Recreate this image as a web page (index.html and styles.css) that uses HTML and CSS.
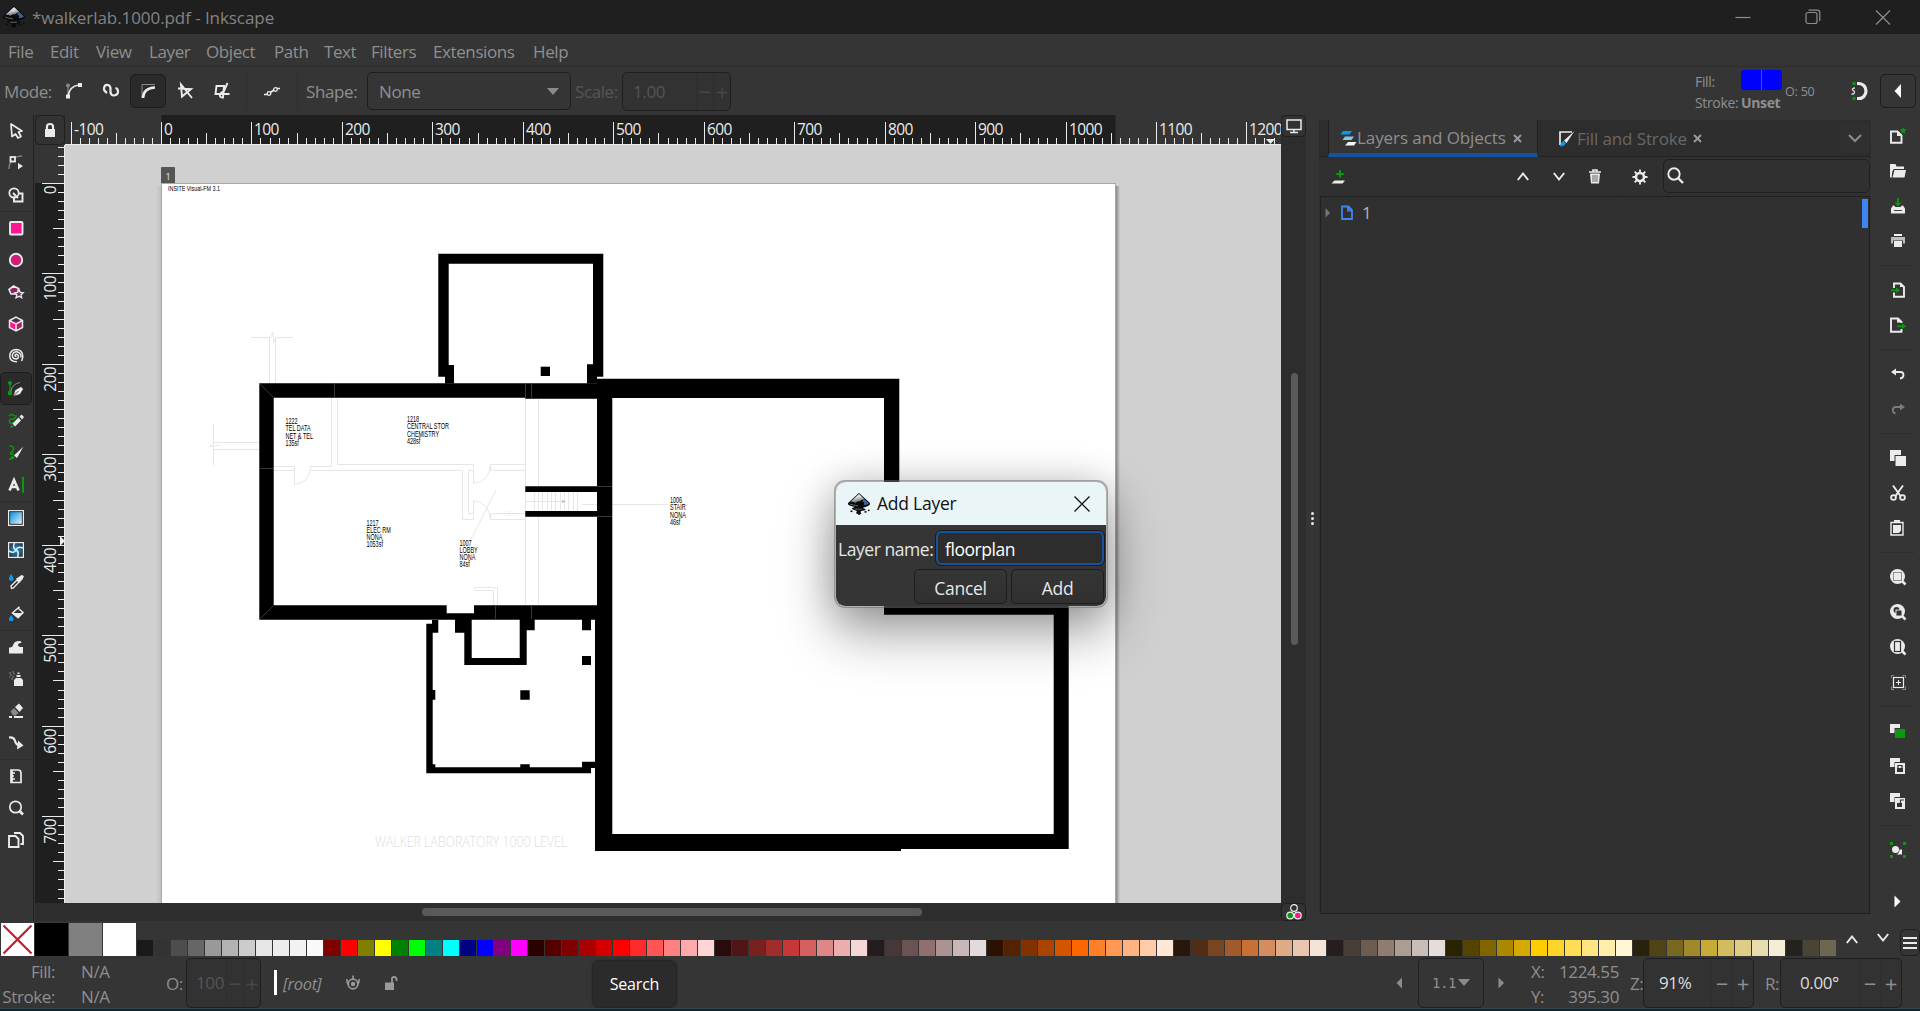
FILE: index.html
```html
<!DOCTYPE html>
<html lang="en">
<head>
<meta charset="utf-8">
<title>*walkerlab.1000.pdf - Inkscape</title>
<link rel="stylesheet" href="styles.css">
</head>
<body>
<svg class="defs" width="0" height="0">
  <defs>
    <linearGradient id="ink" x1="0" y1="0" x2=".35" y2="1"><stop offset="0" stop-color="#fff"/><stop offset=".5" stop-color="#d5d8dc"/><stop offset="1" stop-color="#5d6670"/></linearGradient>
    <linearGradient id="sky" x1="0" y1="0" x2="1" y2="1"><stop offset="0" stop-color="#0a8fdf"/><stop offset="1" stop-color="#e4f0f8"/></linearGradient>
    <radialGradient id="glow"><stop offset="0" stop-color="#10a5ff"/><stop offset="1" stop-color="#2b3f4b"/></radialGradient>
    <symbol id="logo" viewBox="0 0 24 24"><path d="M12 1L1.500 10.500Q0 12.500 2.500 13.500Q6 14.500 8 15Q4.500 15.800 5 17Q8 18.500 10 19L9 21L12 23L14.500 21.500Q13 20 14 19L19 18Q18 16.500 15.500 16L21 14Q24 12.500 22.500 10.500Z" fill="#0a0a0a"/><path d="M12 2L3.500 9.800Q7 9.500 8.500 11Q10.500 8.500 12.500 9.500Q14 7.500 17.500 7.200Z" fill="url(#ink)"/><path d="M17.500 7.200L22 11.500Q20.500 13 16.500 13.300Q18.500 11 15 9Z" fill="#3c62a0"/><path d="M3 12Q7 13.500 11 13.800" stroke="#777" fill="none" stroke-width=".8"/><path d="M8 17.200L15 17.200" stroke="#6d7f9a" stroke-width=".8"/><path d="M17.500 20L19.500 19.700M21 18.500L22.500 18.300M3.500 19L5.500 19.500" stroke="#0a0a0a" stroke-width="1.500"/></symbol>
  </defs>
</svg>
<div class="app">
  <header class="titlebar">
    <svg class="applogo" width="24" height="26"><use href="#logo"/></svg>
    <span class="title">*walkerlab.1000.pdf - Inkscape</span>
    <div class="winbtns">
      <svg viewBox="0 0 16 16"><path d="M.500 8.500H15.500"/></svg>
      <svg viewBox="0 0 16 16"><rect x="1" y="3.500" width="11" height="11" rx="2"/><path d="M3.500 1.200H12Q14.800 1.200 14.800 4V12"/></svg>
      <svg viewBox="0 0 16 16"><path d="M1 1.500L15 15.500M15 1.500L1 15.500"/></svg>
    </div>
  </header>
  <nav class="menubar">
    <span style="width:42px">File</span><span style="width:46px">Edit</span><span style="width:53px">View</span><span style="width:57px">Layer</span><span style="width:68px">Object</span><span style="width:50px">Path</span><span style="width:47px">Text</span><span style="width:62px">Filters</span><span style="width:100px">Extensions</span><span>Help</span>
  </nav>
  <section class="toolbar">
    <span class="mode">Mode:</span>
    <button class="tb"><svg viewBox="0 0 18 18"><path d="M3 3V14" stroke="#777" stroke-width="1.500"/><circle cx="3" cy="3.500" r="2" fill="#888"/><path d="M3 15Q4 4 14 3" stroke="#ebebeb" stroke-width="1.600" fill="none"/><path d="M1 12.500h4v4H1zM13 1h4v4h-4z" fill="#ebebeb"/></svg></button>
    <button class="tb"><svg viewBox="0 0 18 18"><path d="M5 11Q1.500 9 2 6Q3 2 6 3Q9 4 8.500 8Q8 13.500 12 13.500Q16 13 16 9.500Q16 6.500 13.500 6" fill="none" stroke="#ebebeb" stroke-width="2.200"/></svg></button>
    <button class="tb on"><svg viewBox="0 0 18 18"><path d="M3 16V2.500H16" fill="none" stroke="#8a8a8a"/><path d="M4 16Q4.500 6 16 5.500" fill="none" stroke="#ebebeb" stroke-width="2.600"/></svg></button>
    <button class="tb"><svg viewBox="0 0 18 18"><path d="M16 16L5 2.500L6 14.500L15 7L2 6.500" fill="none" stroke="#ebebeb" stroke-width="1.900"/></svg></button>
    <button class="tb"><svg viewBox="0 0 18 18"><path d="M16.500 12H2.500L3.500 4H11L10 15.500Q6 15.500 7 12Q9 10 11 9L14.500 1" fill="none" stroke="#ebebeb" stroke-width="1.900"/></svg></button>
    <i class="vsep"></i>
    <button class="tb wide"><svg viewBox="0 0 18 18"><path d="M1 12.500H4L8 10L11 8L14 6.500H17" fill="none" stroke="#ebebeb" stroke-width="1.700"/><circle cx="6" cy="11.500" r="1.800" fill="#353535" stroke="#ebebeb" stroke-width="1.300"/><circle cx="12.500" cy="7.500" r="1.800" fill="#353535" stroke="#ebebeb" stroke-width="1.300"/></svg></button>
    <i class="vsep"></i>
    <span class="shape">Shape:</span>
    <div class="combo"><span>None</span><b class="tri"></b></div>
    <span class="scale">Scale:</span>
    <div class="spin off scalespin"><span>1.00</span><i>−</i><i>+</i></div>
    <div class="styleind">
      <div class="names"><span>Fill:</span><span>Stroke:</span></div>
      <div class="vals"><div class="blue"></div><b>Unset</b></div>
      <span class="op">O: 50</span>
    </div>
    <svg class="snap" width="18" height="20" viewBox="0 0 18 20"><path d="M7 2.500H9A7 7.500 0 0 1 9 17.500H7" fill="none" stroke="#ebebeb" stroke-width="3.200"/><path d="M5 7Q2 7 2.500 9Q6 10.500 3.500 13L1.500 13" fill="none" stroke="#ddd" stroke-width="1.300"/><circle cx="4" cy="2.500" r="1.800" fill="#0a990e"/><circle cx="4" cy="17.500" r="1.800" fill="#0a990e"/></svg>
    <button class="fold"><svg width="8" height="14"><path d="M7 0V14L.500 7Z" fill="#fff"/></svg></button>
  </section>

  <main class="body">
    <aside class="toolbox">
      <div class="t"><svg viewBox="0 0 16 16"><path d="M3 1L14 8L10.500 9L13 13.500L10 15L7.500 11L4 13.500Z" fill="none" stroke="#ebebeb" stroke-width="1.700" stroke-linejoin="round"/></svg></div>
      <div class="t"><svg viewBox="0 0 16 16"><path d="M1 14Q1 8 4 6M7 2.500Q11 1 14 1" stroke="#888" fill="none" stroke-width="1.300"/><rect x="2.500" y="2" width="4.500" height="4.500" fill="none" stroke="#ebebeb" stroke-width="1.800"/><path d="M10 8V14.500L15 11Z" fill="#ebebeb"/></svg></div>
      <div class="t"><svg viewBox="0 0 16 16"><circle cx="6" cy="6" r="4.700" fill="none" stroke="#ebebeb" stroke-width="1.700"/><path d="M6 9.500V14.500H14.500V6.500H10M5 6L10 11" fill="none" stroke="#ebebeb" stroke-width="1.900"/></svg></div>
      <hr>
      <div class="t"><svg viewBox="0 0 16 16"><rect x="2" y="2" width="12.500" height="12.500" rx="1" fill="#ff1590" stroke="#ebebeb" stroke-width="1.900"/></svg></div>
      <div class="t"><svg viewBox="0 0 16 16"><circle cx="8" cy="8" r="6.200" fill="#cc1f78" stroke="#ebebeb" stroke-width="1.900"/></svg></div>
      <div class="t"><svg viewBox="0 0 16 16"><path d="M5.500 2L10.500 4.500L9.500 10H3L1 5.500Z" fill="#8f2360" stroke="#ebebeb" stroke-width="1.600"/><path d="M11 5.500L12.300 8.300L15.300 8.700L13 10.800L13.700 13.800L11 12.300L8 13.800L8.800 10.800L6.800 8.700L9.700 8.300Z" fill="#8f2360" stroke="#ebebeb" stroke-width="1.300"/></svg></div>
      <div class="t"><svg viewBox="0 0 16 16"><path d="M8 1L15 4.500V11.500L8 15.200L1 11.500V4.500Z" fill="#5b2b45"/><path d="M1 4.500L8 8V15L1 11.500Z" fill="#ff1590"/><path d="M15 4.500L8 8V15L15 11.500Z" fill="#a8246e"/><path d="M8 1.200L14.500 4.500V11.500L8 14.800L1.500 11.500V4.500ZM1.500 4.500L8 8L14.500 4.500M8 8V15" fill="none" stroke="#ebebeb" stroke-width="1.500"/></svg></div>
      <div class="t"><svg viewBox="0 0 16 16"><path d="M8.500 8.500Q7 8.500 7 7.300Q8 5.500 10 7Q11.500 10 8.500 11Q4.500 11 4.300 7.500Q5 3.500 9 3.700Q13.500 5 13 9.500M9 13.800Q2 14 1.700 8Q2.200 1.500 8.500 1.500Q14.800 2 14.800 8.500Q14.500 11.500 13.500 13" fill="none" stroke="#ebebeb" stroke-width="1.500"/></svg></div>
      <div class="t on"><svg viewBox="0 0 16 16"><path d="M2 2V12" stroke="#0a990e" stroke-width="1.300"/><circle cx="2" cy="2" r="2" fill="#0a990e"/><path d="M0 10h4v4H0z" fill="#0a990e"/><path d="M3 10Q4 3 12 1.500" fill="none" stroke="#888"/><path d="M5 15.500L7 9L13 5.500L15.500 8L12 13.500ZM5 15.500L10.500 10" fill="#ebebeb" stroke="#2b2b2b" stroke-width=".8"/></svg></div>
      <div class="t"><svg viewBox="0 0 16 16"><path d="M1 3Q3 .500 5 2T8 3Q8 6 4 6T2 10Q3 11 6 9" fill="none" stroke="#0a990e" stroke-width="1.500"/><path d="M2 15L3.500 11L6 14Z" fill="#0a990e"/><path d="M4.500 10.500L10.500 4.500L13 7.500L7 13.500ZM11.500 3.500L13.500 1.500L16 4L14 6.500Z" fill="#ebebeb"/></svg></div>
      <div class="t"><svg viewBox="0 0 16 16"><path d="M1.500 1Q6 1 5.500 4T2.500 8Q2 10 6 9" fill="none" stroke="#0a990e" stroke-width="1.500"/><path d="M1 15Q2 11 5.500 11L7 13Q5 15 1 15Z" fill="#0a990e"/><path d="M6 10.500L15.500 1.500L9 13Z" fill="#ebebeb"/></svg></div>
      <div class="t"><svg viewBox="0 0 16 16"><path d="M15 0V16" stroke="#0a990e" stroke-width="2"/><path d="M1.500 13.500L6 3L10.500 13.500M3 10H9" fill="none" stroke="#ebebeb" stroke-width="2.600"/></svg></div>
      <hr>
      <div class="t"><svg viewBox="0 0 16 16"><rect x=".6" y=".6" width="14.800" height="14.800" fill="#2a2a2a" stroke="#ebebeb" stroke-width="1.200"/><rect x="2.200" y="2.200" width="11.600" height="11.600" fill="url(#sky)"/></svg></div>
      <div class="t"><svg viewBox="0 0 16 16"><rect x=".6" y=".6" width="14.800" height="14.800" fill="url(#glow)" stroke="#ebebeb" stroke-width="1.200"/><path d="M8 8Q4 6 6.500 1M8 8Q10 4 15 6M8 8Q11.500 10 9.500 15M8 8Q6 12 1 9" fill="none" stroke="#ebebeb" stroke-width="1.500"/></svg></div>
      <div class="t"><svg viewBox="0 0 16 16"><path d="M3 0Q6 4 5.500 5.500Q3.500 8.500 1 5.500Q.500 4 3 0Z" fill="#0d98ea"/><path d="M3.500 14.500L3 12L9 6L11 8L5.500 14Z" fill="none" stroke="#ebebeb" stroke-width="1.300"/><path d="M8 4.500L10 3.500L13.500 1L16 2L14.500 5.500L12.500 7.500L12 9Z" fill="#ebebeb"/></svg></div>
      <div class="t"><svg viewBox="0 0 16 16"><path d="M3 9Q6 12.500 5.500 14Q3.500 16.500 1 14Q.500 12.500 3 9Z" fill="#0d98ea"/><path d="M11.500 .800L4.500 7L10 11.500L15 6.500L10 2" fill="none" stroke="#ebebeb" stroke-width="1.500"/><path d="M4 7H15.500L10 12.500Z" fill="#ebebeb"/></svg></div>
      <hr>
      <div class="t"><svg viewBox="0 0 16 16"><path d="M1 14.500V8.500Q4.500 9 5.500 5Q7 1.500 12 2Q13.500 2.500 13.500 4Q10.500 3.500 10 6Q10.500 8.500 15 8V14.500Z" fill="#ebebeb"/></svg></div>
      <div class="t"><svg viewBox="0 0 16 16"><path d="M6 15V9L8 7H13L15 9V15ZM8.500 4H12.500V6H8.500ZM9.500 1.500H11.500V3H9.500Z" fill="#ebebeb"/><path d="M1 2H3M4 1H6M2 4H4M5 3H7M1 6H2M4 6H6M3 8H5" stroke="#888" stroke-width="1.200"/></svg></div>
      <div class="t"><svg viewBox="0 0 16 16"><path d="M7 4L11 .500L15 5L11.500 9Z" fill="#ebebeb"/><path d="M6 5L10.500 10L7.500 12.500H5L2.500 8.500Z" fill="#8a8a8a"/><path d="M1 14H4M6 14H15" stroke="#ebebeb" stroke-width="2"/></svg></div>
      <div class="t"><svg viewBox="0 0 16 16"><path d="M1 2.500Q6 2 7 6T12 10.500" fill="none" stroke="#ebebeb" stroke-width="2.200"/><path d="M10 5.500L15.500 10.500L9 14.500Z" fill="#ebebeb"/></svg></div>
      <hr>
      <div class="t"><svg viewBox="0 0 16 16"><path d="M3 2H10Q13 2 13 5V14.500H3ZM3 5H7M3 8H6M3 11H7M4 2V14" fill="none" stroke="#ebebeb" stroke-width="1.700"/></svg></div>
      <div class="t"><svg viewBox="0 0 16 16"><circle cx="7.500" cy="7" r="5.700" fill="none" stroke="#ebebeb" stroke-width="1.700"/><path d="M11.500 11L15 14.500" stroke="#ebebeb" stroke-width="2.600"/></svg></div>
      <div class="t"><svg viewBox="0 0 16 16"><path d="M1 4H7.500L10.500 7V15H1ZM6 1H12L15 4V12H12.500" fill="none" stroke="#ebebeb" stroke-width="1.900"/></svg></div>
    </aside>

    <section class="view">
      <div class="lock"><svg width="12" height="16" viewBox="0 0 12 16"><path d="M3 8V4.500Q3 2 6 2T9 4.500V8" fill="none" stroke="#ebebeb" stroke-width="2.200"/><rect x="1" y="7" width="10" height="8" fill="#ebebeb"/></svg></div>
      <svg class="hruler" id="hruler" width="1216" height="30"></svg>
      <div class="screen"><svg width="16" height="15" viewBox="0 0 16 15"><path d="M1 1H15V10.500H1ZM4 13.500H12M8 11V13" fill="none" stroke="#ebebeb" stroke-width="1.500"/></svg></div>
      <svg class="vruler" id="vruler" width="30" height="758"></svg>
      <svg class="canvas" width="1216" height="758" viewBox="65 145 1216 758">
        <defs>
          <linearGradient id="sh" x1="0" x2="1"><stop offset="0" stop-color="#777"/><stop offset="1" stop-color="#d0d0d0"/></linearGradient>
          <linearGradient id="shl" x1="0" x2="1"><stop offset="0" stop-color="#d0d0d0"/><stop offset="1" stop-color="#bdbdbd"/></linearGradient>
        </defs>
        <rect x="65" y="145" width="1216" height="758" fill="#d0d0d0"/>
        <rect x="1115" y="186" width="5" height="717" fill="url(#sh)"/>
        <rect x="156" y="186" width="6" height="717" fill="url(#shl)"/>
        <rect x="161.500" y="183.500" width="954" height="730" fill="#fff" stroke="#a8a8a8"/>
        <path d="M161 183V168Q161 167 162 167H174Q175 167 175 168V183Z" fill="#555"/>
        <text x="165.500" y="180" class="pg">1</text>
        <text x="168" y="191.300" class="room" textLength="52" lengthAdjust="spacingAndGlyphs" style="font-size:6.5px">INSITE Visual-FM 3.1</text>
        <g fill="none" stroke="#e6e6e6">
          <path d="M251 337.500H271L272.500 332L274 342L275.500 337.500H293M269.500 338V383M275.500 338V383"/>
          <path d="M213.500 424.500V444L209 446.500L220 445M213.500 446V465.500M214 442.500H259M214 449.500H259"/>
          <path d="M331.500 398V467M337.500 398V464.500H473.500V483.500Q489 482 490.500 465V470.500H525.500M490.500 464.500H525.500M274 466.500H294.500V484.500Q309 483 310.500 468V466.500H331.500M274 470.500H294M310.500 470.500H462.500V519.500H473.500V500.500Q489 502 490.500 519.500H525.500M473 470.500H468.500V513.500H473.500M490.500 519V513.500H525.500M525.500 398V486M525.500 516V605M538.500 398V486M538.500 516V605M474.500 590V587.500H497.500V605M474.500 590.500H493.500V605M496 490L471 539"/>
          <path d="M525 501.500H565M534.500 492V511M538.500 492V511M542.500 492V511M547.500 492V511M551.500 492V511M555.500 492V511M560.500 492V511M564.500 492V511M568.500 492V511M573.500 492V511M577.500 492V511M582 504.500H668M525.500 486V517"/>
        </g>
        <path d="M562 500V503L566 501.500Z" fill="#bbb"/>
        <g fill="#000">
          <path d="M438.300 253.700H603.300V376.700H597V383.500H587V364.300H593V263.700H448.700V365H454V383.500H445V376.700H438.300Z"/>
          <path d="M540.700 366.700h9.300v9.300h-9.300z"/>
          <path fill-rule="evenodd" d="M259.300 383.300H597V378.700H899.300V500H884V398H612.300V834H1053.700V614.700H884V598H1068.700V849H901V851H595V619.700H259.300ZM273.700 397.700V605.300H446.700V613.300H474V605.300H597V516.700H525.300V511H597V492H525.300V486.300H597V398.700H525.300V397.700Z"/>
          <path d="M432 620H438.300V632.700H432.700V690H435.300V699.700H432.700V764.300H435.300V767.300H520.300V764.300H529.700V767.300H582V761.700H595V768H591V773.300H426.300V623.700H432Z"/>
          <path d="M455 619H471.700V658H519.700V619H534.700V630.300H526.700V665H464.300V632.700H455ZM520.300 690.300h9.400v9.400h-9.400zM582 619h9v11.300h-9zM582 656h9v9h-9z"/>
        </g>
        <path d="M260 384L273.500 397.500M334.500 383V397M525.500 383V398M531.500 383V398M259 468.500H273M260 619L273 606M495.500 606V619M531.500 606V619M597 486.500H612M597 516.500H612" stroke="#444" stroke-width=".8" fill="none"/>
        <g class="room">
          <g transform="translate(285.500 424) scale(.66 1)"><text>1222</text><text y="7.300">TEL DATA</text><text y="14.600">NET &amp; TEL</text><text y="21.900">135sf</text></g>
          <g transform="translate(407 422) scale(.66 1)"><text>1218</text><text y="7.300">CENTRAL STOR</text><text y="14.600">CHEMISTRY</text><text y="21.900">428sf</text></g>
          <g transform="translate(366.500 525.500) scale(.66 1)"><text>1217</text><text y="7.300">ELEC RM</text><text y="14.600">NONA</text><text y="21.900">1053sf</text></g>
          <g transform="translate(459.500 545.500) scale(.66 1)"><text>1007</text><text y="7.300">LOBBY</text><text y="14.600">NONA</text><text y="21.900">84sf</text></g>
          <g transform="translate(670 503) scale(.66 1)"><text>1006</text><text y="7.300">STAIR</text><text y="14.600">NONA</text><text y="21.900">46sf</text></g>
        </g>
        <text x="504" y="516" class="faint" style="font-size:7px">UP</text>
        <text x="375" y="847" class="faint" textLength="192" lengthAdjust="spacingAndGlyphs">WALKER LABORATORY 1000 LEVEL</text>
      </svg>
      <div class="vscroll"><i></i></div>
      <div class="hscroll"><i></i></div>
      <div class="cms"><svg width="18" height="18" viewBox="0 0 18 18"><circle cx="9" cy="5" r="3.300" fill="none" stroke="#ebebeb" stroke-width="1.200"/><circle cx="5.200" cy="12.500" r="3.400" fill="#0a990e" stroke="#ebebeb" stroke-width="1.200"/><circle cx="12.800" cy="12.500" r="3.400" fill="#ff1590" stroke="#ebebeb" stroke-width="1.200"/></svg></div>
    </section>

    <div class="grip"><i></i><i></i><i></i></div>

    <section class="dock">
      <div class="tabs">
        <div class="tab active"><svg width="17" height="18" viewBox="0 0 17 18"><path d="M3 2H12L9.500 5.500H.500Z" fill="#0d98ea"/><path d="M5 7.500H14L11.500 11H2.500Z" fill="#86c5ec"/><path d="M8 13H16.500L14 16.500H5Z" fill="#f4f4f4"/></svg><span>Layers and Objects</span><svg class="x" width="9" height="9" viewBox="0 0 9 9"><path d="M1 1L8 8M8 1L1 8"/></svg></div>
        <div class="tab"><svg width="18" height="18" viewBox="0 0 18 18"><path d="M2 15V2H14" fill="none" stroke="#ebebeb" stroke-width="1.700"/><path d="M16.500 1L6 10.500L8.500 13Z" fill="#f0f0f0"/><path d="M2 16.500Q3 11.500 5.500 11L8 13.500Q6 16.500 2 16.500Z" fill="#0d98ea"/></svg><span class="dimtext">Fill and Stroke</span><svg class="x" width="9" height="9" viewBox="0 0 9 9"><path d="M1 1L8 8M8 1L1 8"/></svg></div>
        <div class="tabmenu"><svg width="14" height="8" viewBox="0 0 14 8"><path d="M1 1L7 7L13 1" fill="none" stroke="#8b8b8b" stroke-width="2"/></svg></div>
      </div>
      <div class="layerbar">
        <svg width="14" height="14" viewBox="0 0 14 14"><path d="M9 0V7.500M5.200 4H12.800" stroke="#0a990e" stroke-width="2"/><path d="M3.500 10.500H14L11.500 13.500H.500Z" fill="#ebebeb"/></svg>
        <svg class="up" width="12" height="9" viewBox="0 0 12 9"><path d="M.800 8L6 1.500L11.200 8" fill="none" stroke="#ebebeb" stroke-width="2"/></svg>
        <svg class="down" width="12" height="9" viewBox="0 0 12 9"><path d="M.800 1L6 7.500L11.200 1" fill="none" stroke="#ebebeb" stroke-width="2"/></svg>
        <svg class="trash" width="12" height="15" viewBox="0 0 12 15"><path d="M0 3H12M4 2.500V1H8V2.500" fill="none" stroke="#ebebeb" stroke-width="1.600"/><path d="M1 4.500H11L10 14.500H2Z" fill="#ebebeb"/><path d="M4 6V13M6 6V13M8 6V13" stroke="#444" stroke-width=".8"/></svg>
        <i class="vsep"></i>
        <svg class="gear" width="16" height="16" viewBox="0 0 16 16"><circle cx="8" cy="8" r="4" fill="none" stroke="#ebebeb" stroke-width="2.600"/><path d="M8 .500V4M8 12V15.500M.500 8H4M12 8H15.500M2.700 2.700L5 5M11 11L13.300 13.300M13.300 2.700L11 5M5 11L2.700 13.300" stroke="#ebebeb" stroke-width="1.800"/></svg>
        <div class="search"><svg width="17" height="17" viewBox="0 0 17 17"><circle cx="7" cy="7" r="5.700" fill="none" stroke="#ebebeb" stroke-width="1.900"/><path d="M11 11L16 16" stroke="#ebebeb" stroke-width="2.400"/></svg></div>
      </div>
      <div class="list">
        <div class="row"><svg width="6" height="10"><path d="M.500 0V9.500L5 5Z" fill="#777"/></svg><svg width="12" height="16" viewBox="0 0 12 16"><path d="M1 1.500H7.500L11 5V14H1ZM7 1.500V5.500H11" fill="none" stroke="#3f85f2" stroke-width="1.800"/></svg><span>1</span><i></i></div>
      </div>
    </section>

    <aside class="commands">
      <div class="c"><svg viewBox="0 0 16 16"><path d="M1 3.500H7.500L11.500 7.500V14.800H1Z" fill="none" stroke="#ebebeb" stroke-width="1.900"/><path d="M7 4V8H11" fill="#ebebeb"/><path d="M13.200 -.800L14.200 1.300L16.500 1.600L14.800 3.200L15.200 5.500L13.200 4.400L11.200 5.500L11.600 3.200L10 1.600L12.200 1.300Z" fill="#0a990e"/></svg></div>
      <div class="c"><svg viewBox="0 0 16 16"><path d="M0 14.500V1H5.500L6.500 3.500H14V6H4Q1.800 7 1.800 14.500ZM2.500 14.500L4.500 7H16L14.500 14.500Z" fill="#ebebeb"/></svg></div>
      <div class="c"><svg viewBox="0 0 16 16"><path d="M8 0V4.500" stroke="#0a990e" stroke-width="2"/><path d="M4.500 4.500H11.500L8 8.500Z" fill="#0a990e"/><path d="M1 15.500V10.500L3 7.500H4L5.500 9H10.500L12 7.500H13L15 10.500V15.500Z" fill="#ebebeb"/><path d="M4 12.500H12" stroke="#444"/></svg></div>
      <div class="c"><svg viewBox="0 0 16 16"><path d="M4 1H12V3H4Z" fill="#f4f4f4"/><path d="M1 4H15V10.500H1Z" fill="#bdbdbd"/><path d="M3 7.500H13V14.500H3Z" fill="#353535"/><path d="M4 8H12V14H4Z" fill="#ebebeb"/></svg></div>
      <hr>
      <div class="c"><svg viewBox="0 0 16 16"><path d="M4 6V1.500H10.500L14 5V14.800H4V10.500" fill="none" stroke="#ebebeb" stroke-width="1.900"/><path d="M10 1V5H14" fill="#ebebeb"/><path d="M1 8.300H7" stroke="#0a990e" stroke-width="1.800"/><path d="M6 5.500L10 8.300L6 11Z" fill="#0a990e"/></svg></div>
      <div class="c"><svg viewBox="0 0 16 16"><path d="M11.500 6V5L8 1.500H1V14.800H11.500V12" fill="none" stroke="#ebebeb" stroke-width="1.900"/><path d="M7 1V5.500H11.500" fill="#ebebeb"/><path d="M7 9.300H13" stroke="#0a990e" stroke-width="1.800"/><path d="M12 6.500L16 9.300L12 12Z" fill="#0a990e"/></svg></div>
      <hr>
      <div class="c"><svg viewBox="0 0 16 16"><path d="M5 6H10.500Q13.500 6 13.500 9Q13.500 12 10 12.500" fill="none" stroke="#ebebeb" stroke-width="1.800"/><path d="M1 6L6 2.500V9.500Z" fill="#ebebeb"/></svg></div>
      <div class="c"><svg viewBox="0 0 16 16"><path d="M11 6H6Q2.800 6 2.800 9Q2.800 12 5.500 12.500" fill="none" stroke="#7c7c7c" stroke-width="1.800"/><path d="M15 6L10 2.500V9.500Z" fill="#7c7c7c"/></svg></div>
      <hr>
      <div class="c"><svg viewBox="0 0 16 16"><path d="M0 0H11V5H4.500V11H0Z" fill="#ebebeb"/><path d="M5.500 6H16V16H5.500Z" fill="#ebebeb"/></svg></div>
      <div class="c"><svg viewBox="0 0 16 16"><path d="M3 .500L10.500 11M13 .500L5.500 11" stroke="#ebebeb" stroke-width="1.900"/><circle cx="3.500" cy="12.500" r="2.400" fill="none" stroke="#ebebeb" stroke-width="1.800"/><circle cx="12.500" cy="12.500" r="2.400" fill="none" stroke="#ebebeb" stroke-width="1.800"/></svg></div>
      <div class="c"><svg viewBox="0 0 16 16"><path d="M1 2.500H13V15H1Z" fill="none" stroke="#ebebeb" stroke-width="1.400"/><path d="M4 0H10V3H4ZM3 5H11V10.500L9 13H3Z" fill="#ebebeb"/></svg></div>
      <hr>
      <div class="c"><svg viewBox="0 0 16 16"><circle cx="7.500" cy="7.500" r="7.500" fill="#ebebeb"/><path d="M12 12L15.500 15.500" stroke="#ebebeb" stroke-width="2.500"/><rect x="3.500" y="3.500" width="8" height="8" fill="none" stroke="#333" stroke-dasharray="1 1"/></svg></div>
      <div class="c"><svg viewBox="0 0 16 16"><circle cx="7.500" cy="7.500" r="7.500" fill="#ebebeb"/><path d="M12 12L15.500 15.500" stroke="#ebebeb" stroke-width="2.500"/><circle cx="6.500" cy="6" r="3" fill="#353535"/><rect x="6" y="6" width="6" height="6" fill="#353535" stroke="#ebebeb" stroke-width=".9"/></svg></div>
      <div class="c"><svg viewBox="0 0 16 16"><circle cx="7.500" cy="7.500" r="7.500" fill="#ebebeb"/><path d="M12 12L15.500 15.500" stroke="#ebebeb" stroke-width="2.500"/><rect x="4.500" y="2.500" width="6" height="10" fill="none" stroke="#333" stroke-width="1.200"/></svg></div>
      <div class="c"><svg viewBox="0 0 16 16"><path d="M1.500 4V1.500H4M12.500 1.500H15.500V4M15.500 12.500V15.500H12.500M4 15.500H1.500V12.500" fill="none" stroke="#888"/><rect x="3.500" y="3.500" width="10" height="10" fill="none" stroke="#ebebeb" stroke-width="1.200"/><path d="M8.500 6V11M6 8.500H11" stroke="#ebebeb"/></svg></div>
      <hr>
      <div class="c"><svg viewBox="0 0 16 16"><path d="M0 1H10V5H4.500V10H0Z" fill="#ebebeb"/><path d="M5 6H15V15H5Z" fill="#0a990e"/></svg></div>
      <div class="c"><svg viewBox="0 0 16 16"><path d="M0 0H10V4H4.500V9H0Z" fill="#ebebeb"/><path d="M5 5H15V16H5Z" fill="#ebebeb"/><path d="M7 10H13V14H7Z" fill="#333"/><path d="M8 10V7.500H12V10" fill="none" stroke="#333" stroke-width="1.200"/></svg></div>
      <div class="c"><svg viewBox="0 0 16 16"><path d="M0 0H10V4H4.500V9H0Z" fill="#ebebeb"/><path d="M5 5H15V16H5Z" fill="#ebebeb"/><path d="M7 10H12V14H7Z" fill="#333"/><path d="M10.500 10V7H14" fill="none" stroke="#333" stroke-width="1.200"/></svg></div>
      <hr>
      <div class="c"><svg viewBox="0 0 16 16"><path d="M0 0H3V3H0ZM13 0H16V3H13ZM0 13H3V16H0ZM13 13H16V16H13Z" fill="#0a990e"/><circle cx="5.500" cy="7.500" r="3.500" fill="#ebebeb"/><path d="M9.500 7.500H12V12.500H6.500Q9.500 11 9.500 7.500Z" fill="#ebebeb"/></svg></div>
      <svg class="more" width="7" height="13"><path d="M.500 .500V12.500L6.500 6.500Z" fill="#fff"/></svg>
    </aside>
  </main>

  <section class="palette">
    <div class="big"><span class="none"><svg width="33" height="33" viewBox="0 0 33 33"><path d="M2.500 2.500L30.500 30.500M30.500 2.500L2.500 30.500" stroke="#c02030" stroke-width="2.200"/></svg></span><span style="background:#000"></span><span style="background:#808080"></span><span style="background:#fff"></span></div>
    <div class="swatches" id="swatches"></div>
    <svg class="pup" width="12" height="9" viewBox="0 0 12 9"><path d="M.800 8L6 1.500L11.200 8" fill="none" stroke="#ebebeb" stroke-width="2"/></svg>
    <svg class="pdn" width="12" height="9" viewBox="0 0 12 9"><path d="M.800 1L6 7.500L11.200 1" fill="none" stroke="#ebebeb" stroke-width="2"/></svg>
    <div class="burger"><i></i><i></i><i></i></div>
  </section>

  <footer class="status">
    <div class="fs"><span>Fill:</span><span>N/A</span><span>Stroke:</span><span>N/A</span></div>
    <span class="olab">O:</span>
    <div class="spin off opspin"><span>100</span><i>−</i><i>+</i></div>
    <b class="caret"></b>
    <em>[root]</em>
    <svg class="eye" width="16" height="16" viewBox="0 0 16 16"><path d="M2 4Q1.500 7 3 9M14 4Q14.500 7 13 9M8 .500V5" stroke="#9a9a9a" stroke-width="1.600" fill="none"/><circle cx="8" cy="9" r="4.800" fill="none" stroke="#9a9a9a" stroke-width="1.700"/><circle cx="8" cy="9" r="2.200" fill="#9a9a9a"/></svg>
    <svg class="unlock" width="14" height="16" viewBox="0 0 14 16"><path d="M1 7.500H10V15H1Z" fill="#9a9a9a"/><path d="M8 8V3.500Q8 2 10 2T12.500 3.500V6" fill="none" stroke="#9a9a9a" stroke-width="1.800"/></svg>
    <div class="tip">Search</div>
    <div class="right">
      <svg class="pl" width="7" height="12"><path d="M6 .500V11.500L.500 6Z" fill="#8b8b8b"/></svg>
      <div class="pagebox"><span>1.1</span><b class="tri"></b></div>
      <svg class="pr" width="7" height="12"><path d="M.500 .500V11.500L6 6Z" fill="#8b8b8b"/></svg>
      <div class="xy"><span>X:</span><span>1224.55</span><span>Y:</span><span>395.30</span></div>
      <span class="zl">Z:</span>
      <div class="spin zspin"><span>91%</span><i>−</i><i>+</i></div>
      <span class="rl">R:</span>
      <div class="spin rspin"><span>0.00°</span><i>−</i><i>+</i></div>
    </div>
  </footer>
  <div class="edge"></div>
</div>

<div class="dialog">
  <div class="dhead"><svg width="24" height="24"><use href="#logo"/></svg><span>Add Layer</span><svg class="dx" width="16" height="16" viewBox="0 0 16 16"><path d="M.500 .500L15.500 15.500M15.500 .500L.500 15.500" stroke="#111" stroke-width="1.300"/></svg></div>
  <div class="dbody">
    <div class="field"><label>Layer name:</label><div class="input">floorplan</div></div>
    <div class="actions"><div class="btn">Cancel</div><div class="btn">Add</div></div>
  </div>
</div>
<script src="app.js"></script>
</body>
</html>
```
FILE: styles.css
```css
* { box-sizing: border-box; }
body { margin: 0; width: 1920px; height: 1011px; overflow: hidden; position: relative; background: #353535; color: #8f8f8f; font: 17px/22px "Open Sans", "Noto Sans", sans-serif; letter-spacing: -0.4px; }
svg { display: block; overflow: visible; flex: none; }
.defs { position: absolute; }
button { border: 1px solid transparent; background: none; padding: 0; margin: 0; display: flex; align-items: center; justify-content: center; flex: none; }
.app { height: 1011px; display: flex; flex-direction: column; }
.titlebar { height: 34px; flex: none; background: #1f1f1f; display: flex; align-items: center; padding: 0 29px 0 2px; }
.title { margin-left: 6px; padding-top: 1px; color: #838383; font-size: 17px; letter-spacing: -0.07px; }
.winbtns { margin-left: auto; display: flex; gap: 54px; }
.winbtns svg { width: 16px; height: 16px; fill: none; stroke: #8e8e8e; stroke-width: 1.2; }
.menubar { height: 33px; flex: none; display: flex; align-items: center; padding: 3px 0 0 8px; border-bottom: 1px solid #2e2e2e; }
.menubar span { flex: none; }
.toolbar { height: 48px; flex: none; display: flex; align-items: center; padding-left: 4px; white-space: nowrap; }
.mode { width: 52px; }
.mode, .shape, .scale, .combo span, .scalespin span { padding-top: 1px; }
.tb { width: 36px; height: 34px; margin-right: 1px; border-radius: 5px; }
.tb svg { width: 18px; height: 18px; }
.tb.on { background: #2a2a2a; border-color: #1d1d1d; }
.tb.wide { width: 50px; margin: 0; }
.vsep { width: 1px; height: 38px; background: #2e2e2e; flex: none; }
.toolbar .tb + .vsep { margin-left: 5px; }
.toolbar .tb.wide + .vsep { margin-left: 0; }
.shape { width: 61px; margin-left: 8px; flex: none; }
.combo { width: 204px; height: 38px; border: 1px solid #1d1d1d; border-radius: 5px; display: flex; align-items: center; justify-content: space-between; padding: 0 11px; flex: none; }
.tri { border: 6px solid transparent; border-top: 7px solid #8b8b8b; border-bottom: 0; }
.scale { width: 47px; margin-left: 4px; color: #555; }
.spin { display: flex; align-items: center; border: 1px solid #1f1f1f; border-radius: 5px; color: #ddd; flex: none; overflow: hidden; background: #323232; }
.spin span { flex: 1; }
.spin i { height: 100%; border-left: 1px solid #2e2e2e; font-style: normal; font-size: 22px; letter-spacing: 0; display: flex; align-items: center; justify-content: center; color: #8f8f8f; flex: none; }
.spin.off { color: #555; }
.spin.off i { color: #484848; }
.scalespin { width: 109px; height: 39px; padding-left: 10px; }
.scalespin i { width: 17px; }
.styleind { margin-left: auto; display: flex; font-size: 14px; letter-spacing: -0.35px; line-height: 21px; width: 155px; }
.names { display: flex; flex-direction: column; width: 46px; padding-top: 1px; }
.vals { width: 44px; display: flex; flex-direction: column; }
.blue { width: 41px; height: 20px; border-radius: 3px; margin-bottom: 2px; background: linear-gradient(90deg, #00f 20px, #4a4ae8 20px, #4a4ae8 21px, #00f 21px); }
.op { font-size: 12.500px; align-self: center; letter-spacing: -0.2px; }
.snap { margin-right: 12px; }
.fold { width: 36px; height: 34px; border: 1px solid #1d1d1d; border-radius: 5px; margin-right: 4px; }

.body { height: 806px; flex: none; display: flex; }
.toolbox { width: 34px; border-right: 1.500px solid #222; flex: none; }
.t { width: 32px; height: 32px; display: flex; align-items: center; justify-content: center; }
.t svg { width: 16px; height: 16px; }
.t.on { height: 33px; padding-top: 1px; background: #2a2a2a; border: 1px solid #1d1d1d; border-radius: 5px; }
hr { border: 0; height: 1px; background: #2e2e2e; margin: 0; }
.view { margin-left: 1px; display: grid; grid-template-columns: 30px 1216px 25px; grid-template-rows: 30px 758px 18px; flex: none; background: #2d2d2d; }
.lock, .screen, .cms { border: 1px solid #1f1f1f; border-radius: 5px; background: #333; display: flex; align-items: center; justify-content: center; }
.screen { height: 22px; }
.hruler, .canvas { overflow: hidden; }
.hruler text, .vruler text { font: 15.500px "Open Sans", sans-serif; letter-spacing: -0.6px; fill: #ebebeb; }
.pg { font: 9px "Open Sans", sans-serif; letter-spacing: 0; fill: #eee; }
.room { font: 8.300px "Liberation Sans", sans-serif; letter-spacing: 0; fill: #000; }
.faint { font: 300 14px "Open Sans", sans-serif; letter-spacing: 0; fill: #dedede; }
.vscroll { padding: 228px 0 0 10px; }
.vscroll i { display: block; width: 7px; height: 272px; border-radius: 4px; background: #5a5a58; }
.hscroll { grid-column: 1 / 3; padding: 5px 0 0 387px; }
.hscroll i { display: block; width: 500px; height: 8px; border-radius: 4px; background: #5a5a58; }
.grip { width: 13px; padding-left: 5px; display: flex; flex-direction: column; justify-content: center; gap: 2px; flex: none; }
.grip i { width: 3px; height: 3px; border-radius: 2px; background: #e8e8e8; }

.dock { width: 552px; margin-top: 5px; height: 794px; flex: none; background: #303030; display: flex; flex-direction: column; }
.tabs { height: 37px; display: flex; background: #2d2d2d; border-bottom: 1px solid #222; padding-left: 9px; }
.tab { height: 37px; display: flex; align-items: center; padding-left: 20px; }
.tab.active { width: 210px; background: #353535; border-bottom: 4px solid #15539e; border-right: 1px solid #202020; border-left: 1px solid #202020; padding: 3px 0 0 11px; }
.tab.active span { width: 156px; }
.tab span { white-space: nowrap; letter-spacing: -0.08px; }
.tab .dimtext { color: #686868; width: 116px; margin-left: 1px; letter-spacing: -0.12px; }
.x { stroke: #999; stroke-width: 2; fill: none; }
.tabmenu { margin: 3px 1px 0 auto; width: 30px; height: 30px; border-radius: 5px; background: #303030; display: flex; align-items: center; justify-content: center; }
.layerbar { height: 39px; display: flex; align-items: center; padding: 0 1px 0 12px; }
.up { margin-left: 172px; }
.down { margin-left: 24px; }
.trash { margin-left: 24px; }
.layerbar .vsep { margin-left: 16px; height: 36px; }
.gear { margin-left: 14px; }
.search { margin-left: 15px; flex: 1; height: 34px; border: 1px solid #202020; border-radius: 5px; display: flex; align-items: center; padding-left: 3px; margin-bottom: 2px; }
.list { flex: 1; border: 1.500px solid #202020; margin-left: 1px; margin-right: 1px; }
.row { height: 31px; display: flex; align-items: center; padding: 1px 1px 0 4px; color: #b5b5b5; }
.row svg + svg { margin: 0 9px 0 10px; }
.row i { margin-left: auto; width: 6px; height: 29px; background: #3f85f2; }
.commands { flex: 1; padding: 3.500px 0 0 0; }
.c { height: 35px; display: flex; align-items: center; justify-content: center; padding-left: 4px; }
.c svg { width: 16px; height: 16px; }
.commands hr { margin: 6px 5px 7px 9px; }
.more { margin: 27px 0 0 23px; }

.palette { height: 35px; flex: none; display: flex; align-items: flex-end; padding-left: 1px; }
.big { display: flex; gap: 1px; margin-right: 1px; }
.big span { width: 33px; height: 33px; background: #fff; }
.swatches { display: flex; gap: 1px; width: 1699px; }
.swatches i { width: 16px; height: 16px; flex: none; }
.pup { margin: 0 0 12px 10px; }
.pdn { margin: 0 0 14px 19px; }
.burger { margin-left: auto; width: 20px; height: 27px; border: 1px solid #1f1f1f; border-radius: 5px; display: flex; flex-direction: column; align-items: center; justify-content: center; gap: 3px; }
.burger i { width: 14px; height: 2px; background: #ebebeb; }
.status { height: 52px; flex: none; display: flex; align-items: center; padding-top: 1px; }
.fs { display: grid; grid-template-columns: 55px 64px; column-gap: 26px; line-height: 25px; width: 166px; flex: none; padding-top: 2px; }
.fs span:nth-child(odd) { text-align: right; }
.olab { width: 20px; padding-top: 2px; }
.opspin { width: 75px; height: 50px; padding-left: 9px; }
.spin.opspin span, .spin.zspin span, .spin.rspin span { padding-top: 1px; }
.opspin i { width: 17px; }
.caret { width: 3px; height: 25px; background: #fff; margin: 0 6px 0 13px; }
em { width: 62px; font-size: 16.500px; letter-spacing: -0.3px; padding-top: 2px; }
.eye { margin-top: 1px; }
.unlock { margin-left: 23px; }
.tip { margin-left: 194px; width: 85px; height: 48px; margin-top: 2px; background: #2b2b2b; border: 1px solid #262626; border-radius: 8px; box-shadow: 0 0 2px #222; color: #fff; display: flex; align-items: center; justify-content: center; font-size: 16px; letter-spacing: -0.2px; }
.right { margin-left: auto; display: flex; align-items: center; padding-right: 18px; }
.pagebox { width: 66px; height: 50px; border: 1px solid #1f1f1f; border-radius: 5px; margin: 0 14px 0 15px; display: flex; align-items: center; justify-content: center; gap: 2px; font: 14px "DejaVu Sans Mono", monospace; }
.xy { display: grid; grid-template-columns: 25px 63px; line-height: 25px; margin: 0 11px 0 26px; padding-top: 2px; }
.xy span:nth-child(even) { text-align: right; }
.zl { width: 13px; padding-top: 2px; }
.zspin { width: 111px; height: 50px; padding-left: 15px; }
.zspin i { width: 21px; }
.rl { width: 15px; margin-left: 11px; padding-top: 2px; }
.rspin { width: 122px; height: 50px; padding-left: 19px; }
.rspin i { width: 21px; }
.edge { height: 3px; background: linear-gradient(#33444b 1.500px, #14262e 1.500px); }

.dialog { position: absolute; left: 834px; top: 480px; width: 274px; height: 128px; border: 2px solid rgba(110,110,110,.55); border-radius: 11px; background: #353535; background-clip: padding-box; box-shadow: 0 24px 54px rgba(0,0,0,.38), 0 2px 36px rgba(0,0,0,.16); color: #e6e6e6; font-size: 17.500px; letter-spacing: -0.45px; }
.dhead { height: 43px; border-radius: 9px 9px 0 0; background: #eaf5f8; color: #111; display: flex; align-items: center; padding: 0 16px 0 11px; }
.dhead span { margin: 0 0 1px 6px; font-size: 17.500px; letter-spacing: -0.25px; }
.dx { margin-left: auto; }
.dbody { padding: 6px 2px 0 2px; }
.field { display: flex; align-items: center; justify-content: space-between; }
.field label { padding-top: 1px; }
.input { width: 168px; height: 34px; border: 2px solid #15539e; outline: 1px solid #1a1a1a; outline-offset: 0; border-radius: 5px; background: #2d2d2d; color: #fff; padding: 5px 7px; }
.actions { display: flex; justify-content: flex-end; gap: 4px; margin-top: 4px; }
.btn { width: 93px; height: 35px; border: 1px solid #1d1d1d; border-radius: 5px; display: flex; align-items: center; justify-content: center; padding-top: 2px; background: linear-gradient(#353535, #303030); letter-spacing: -0.3px; }
```
FILE: app.js
```js
// Ruler scale: pixels per 10 document units
var STEP = 9.045;

function horizontalRuler() {
  var left = 65, zero = 161.5, out = '';
  out += '<rect width="1216" height="30" fill="#353535"/><rect x="' + (zero - left) + '" width="954" height="30" fill="#1e1f1e"/>';
  for (var i = -10; i <= 123; i++) {
    var x = Math.round(zero + i * STEP - 0.5) - left;
    var top = i % 10 === 0 ? 7 : i % 5 === 0 ? 18 : 23;
    out += '<rect x="' + x + '" y="' + top + '" width="1" height="' + (30 - top) + '" fill="#ebebeb"/>';
    if (i % 10 === 0) out += '<text x="' + (x + 3) + '" y="20">' + i * 10 + '</text>';
  }
  out += '<path d="M1201 24L1210 24L1205.500 29Z" fill="#ebebeb"/><rect y="29" width="1216" height="1" fill="#ebebeb"/>';
  document.getElementById('hruler').innerHTML = out;
}

function verticalRuler() {
  var top = 145, zero = 183.5, out = '';
  out += '<rect width="30" height="758" fill="#353535"/><rect y="38" width="30" height="720" fill="#1e1f1e"/>';
  for (var i = -4; i <= 79; i++) {
    var y = Math.round(zero + i * STEP - 0.5) - top;
    var w = i % 10 === 0 ? 23 : i % 5 === 0 ? 12 : 7;
    out += '<rect x="' + (30 - w) + '" y="' + y + '" width="' + w + '" height="1" fill="#ebebeb"/>';
    if (i % 10 === 0) out += '<text text-anchor="end" transform="translate(20.500 ' + (y + 3) + ') rotate(-90)">' + i * 10 + '</text>';
  }
  out += '<path d="M25 391L30 396L25 401Z" fill="#ebebeb"/><rect x="29" width="1" height="758" fill="#ebebeb"/>';
  document.getElementById('vruler').innerHTML = out;
}

var COLORS = ('1a1a1a 333333 4d4d4d 666666 999999 b3b3b3 cccccc e6e6e6 ececec f2f2f2 f9f9f9 ' +
  '800000 ff0000 808000 ffff00 008000 00ff00 008080 00ffff 000080 0000ff 800080 ff00ff ' +
  '2b0000 550000 800000 aa0000 d40000 ff0000 ff2a2a ff5555 ff8080 ffaaaa ffd5d5 ' +
  '280b0b 501616 782121 a02c2c c83737 d35f5f de8787 e9afaf f4d7d7 ' +
  '241c1c 483737 6c5353 916f6f ac9393 c8b7b7 e3dbdb ' +
  '2b1100 552200 803300 aa4400 d45500 ff6600 ff7f2a ff9955 ffb380 ffccaa ffe6d5 ' +
  '28170b 502d16 784421 a05a2c c87137 d38d5f deaa87 e9c6af f4e3d7 ' +
  '241f1c 483e37 6c5d53 917c6f ac9d93 c8beb7 e3dedb ' +
  '2b2200 554400 806600 aa8800 d4aa00 ffcc00 ffd42a ffdd55 ffe680 ffeeaa fff6d5 ' +
  '28220b 504416 786721 a0892c c8ab37 d3bc5f decd87 e9ddaf f4eed7 24221c 484537 6c6753').split(' ');

horizontalRuler();
verticalRuler();
document.getElementById('swatches').innerHTML = COLORS.map(function (c) {
  return '<i style="background:#' + c + '"></i>';
}).join('');
```
